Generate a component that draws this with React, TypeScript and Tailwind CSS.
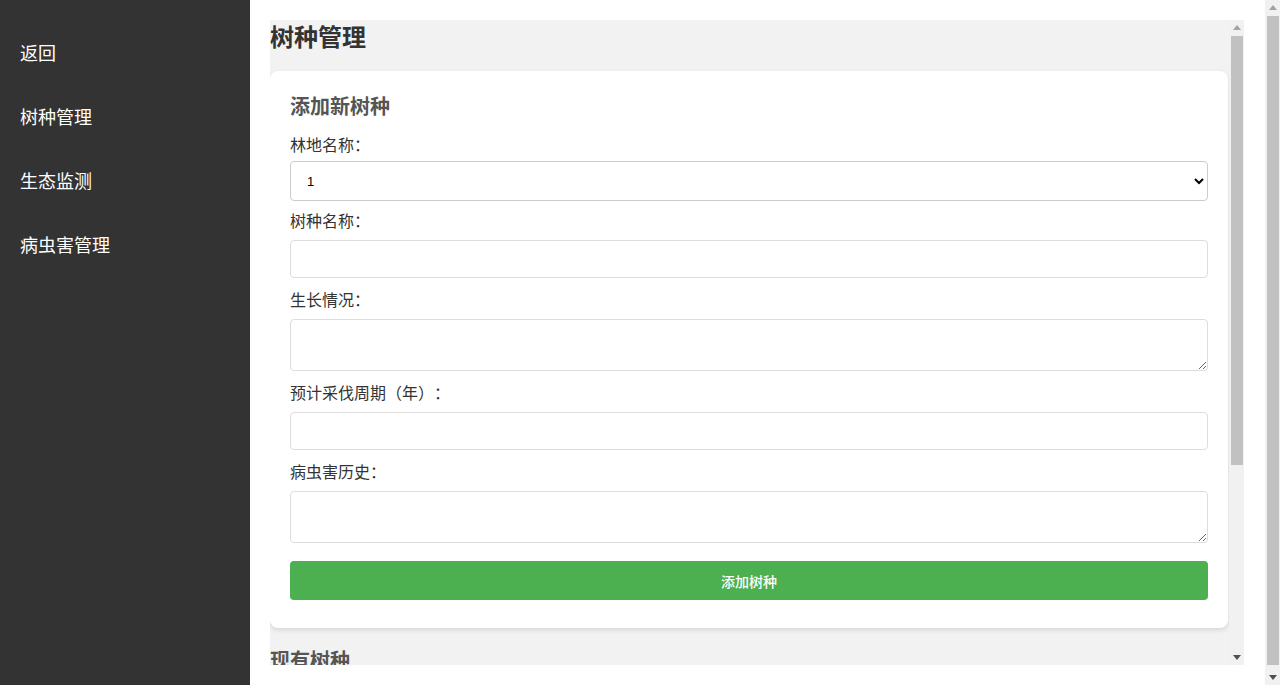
import { useState } from "react";

const cjk = "font-['Noto_Sans_CJK_SC',sans-serif] [text-spacing-trim:space-all]";

const navItems = ["返回", "树种管理", "生态监测", "病虫害管理"];

function Arrow({ dir, active }: { dir: "up" | "down"; active: boolean }) {
  return (
    <div className="flex h-[15px] w-[15px] shrink-0 items-center justify-center">
      <svg width="8" height="5" viewBox="0 0 8 5" className={active ? "fill-[#505050]" : "fill-[#a3a3a3]"}>
        {dir === "up" ? <polygon points="0,5 8,5 4,0" /> : <polygon points="0,0 8,0 4,5" />}
      </svg>
    </div>
  );
}

// fake classic scrollbar, matches the headful chrome look of the screenshot
function Scrollbar({ thumb }: { thumb: number }) {
  return (
    <div className="flex w-[15px] shrink-0 flex-col bg-[#f1f1f1]">
      <Arrow dir="up" active={false} />
      <div className="flex-1 pt-px">
        <div className="mx-auto w-3 bg-[#c1c1c1]" style={{ height: thumb }} />
      </div>
      <Arrow dir="down" active />
    </div>
  );
}

export default function App() {
  const [forest, setForest] = useState("1");
  const [name, setName] = useState("");
  const [growth, setGrowth] = useState("");
  const [cycle, setCycle] = useState("");
  const [history, setHistory] = useState("");

  return (
    <div className={`flex h-[685px] overflow-hidden bg-white text-[#333] ${cjk}`}>
      <aside className="flex w-[250px] shrink-0 flex-col bg-[#333] pt-5">
        {navItems.map((item) => (
          <a key={item} href="#" className="flex h-16 items-center px-5 text-lg text-white">
            {item}
          </a>
        ))}
      </aside>
      <main className="min-w-0 flex-1 pt-5 pl-5 pr-[21px]">
        <div className="flex h-[645px] bg-[#f2f2f2]">
          <div className="min-w-0 flex-1 overflow-hidden">
            <h2 className="text-2xl leading-8 font-bold text-[#333]">树种管理</h2>
            <div className="mt-[19px] mr-px rounded-lg bg-white px-5 pt-5 pb-[28px] shadow-[0_2px_5px_rgba(0,0,0,0.12)]">
              <h3 className="text-xl leading-[30px] font-bold text-[#555]">添加新树种</h3>

              <label className="mt-[11px] block text-base leading-6">林地名称：</label>
              <select
                value={forest}
                onChange={(e) => setForest(e.target.value)}
                className="mt-[5px] block h-10 w-full rounded border border-[#ccc] bg-white px-3 font-['Liberation_Sans',sans-serif] text-[13px] text-black"
              >
                <option value="1">1</option>
                <option value="2">2</option>
              </select>

              <label className="mt-[7px] block text-base leading-6">树种名称：</label>
              <input
                value={name}
                onChange={(e) => setName(e.target.value)}
                className="mt-2 block h-[38px] w-full rounded border border-[#ddd] px-2.5 text-sm"
              />

              <label className="mt-[9px] block text-base leading-6">生长情况：</label>
              <textarea
                value={growth}
                onChange={(e) => setGrowth(e.target.value)}
                className="mt-2 block h-[52px] w-full rounded border border-[#ddd] px-2.5 text-sm"
              />

              <label className="mt-[9px] block text-base leading-6">预计采伐周期（年）：</label>
              <input
                value={cycle}
                onChange={(e) => setCycle(e.target.value)}
                className="mt-2 block h-[38px] w-full rounded border border-[#ddd] px-2.5 text-sm"
              />

              <label className="mt-[9px] block text-base leading-6">病虫害历史：</label>
              <textarea
                value={history}
                onChange={(e) => setHistory(e.target.value)}
                className="mt-2 block h-[52px] w-full rounded border border-[#ddd] px-2.5 text-sm"
              />

              <button
                type="button"
                className="mt-[18px] block h-[39px] w-full rounded bg-[#4caf50] text-sm font-medium text-white"
              >
                添加树种
              </button>
            </div>

            <h3 className="mt-[17px] text-xl leading-[30px] font-bold text-[#555]">现有树种</h3>
            <div className="mt-4 rounded-lg bg-white p-5 shadow-[0_2px_5px_rgba(0,0,0,0.12)]">
              <p className="text-base">暂无数据</p>
            </div>
          </div>
          <Scrollbar thumb={429} />
        </div>
      </main>
      <Scrollbar thumb={649} />
    </div>
  );
}
